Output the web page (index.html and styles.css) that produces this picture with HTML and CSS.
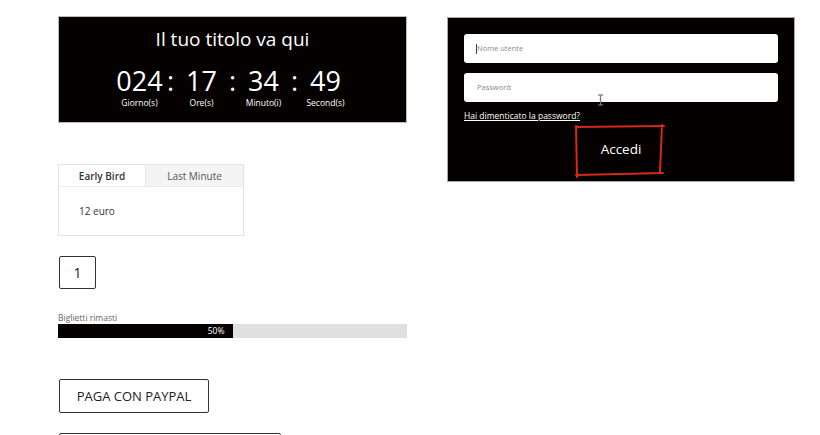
FILE: index.html
```html
<!DOCTYPE html>
<html>
    <head>
        <meta charset="utf-8">
        <title>Evento</title>
        <link rel="stylesheet" href="styles.css">
    </head>
    <body>
        <div class="page">
            <div class="col-left">
                <div class="countdown">
                    <div class="countdown-title">Il tuo titolo va qui</div>
                    <div class="countdown-row">
                        <div class="unit"><span class="num">024</span><span class="lbl">Giorno(s)</span></div>
                        <span class="sep">:</span>
                        <div class="unit"><span class="num">17</span><span class="lbl">Ore(s)</span></div>
                        <span class="sep">:</span>
                        <div class="unit"><span class="num">34</span><span class="lbl">Minuto(i)</span></div>
                        <span class="sep">:</span>
                        <div class="unit"><span class="num">49</span><span class="lbl">Second(s)</span></div>
                    </div>
                </div>

                <div class="tabs">
                    <div class="tabs-head">
                        <span class="tab tab-active">Early Bird</span>
                        <span class="tab">Last Minute</span>
                    </div>
                    <div class="tabs-body">12 euro</div>
                </div>

                <div class="qty">1</div>

                <div class="stock">
                    <div class="stock-label">Biglietti rimasti</div>
                    <div class="stock-bar">
                        <div class="stock-fill" style="width: 50%">50%</div>
                    </div>
                </div>

                <button class="btn-pay">PAGA CON PAYPAL</button>
                <button class="btn-pay btn-wide">&nbsp;</button>
            </div>

            <div class="col-right">
                <div class="login">
                    <div class="field focused"><span class="caret"></span>Nome utente</div>
                    <div class="field">Password</div>
                    <a class="forgot" href="#">Hai dimenticato la password?</a>
                    <div class="login-actions">
                        <span class="btn-login">
                            Accedi
                            <svg class="scribble" width="94" height="56" viewBox="0 0 94 56">
                                <path d="M3 5 L91 4 M89 3 L87 50 M90 51 L3 53 M4 55 L3 4" fill="none" stroke="#d42a1a" stroke-width="2" stroke-linecap="round"/>
                            </svg>
                        </span>
                    </div>
                    <svg class="ibeam" width="7" height="12" viewBox="0 0 7 12">
                        <path d="M1 1 H6 M3.5 1 V11 M1 11 H6" fill="none" stroke="#333" stroke-width="1.2"/>
                        <path d="M1 1 H6 M3.5 1 V11 M1 11 H6" fill="none" stroke="#eee" stroke-width="0.4"/>
                    </svg>
                </div>
            </div>
        </div>
    </body>
</html>
```

FILE: styles.css
```css
body {
    margin: 0;
    background-color: #fff;
    font-family: "Open Sans", "Liberation Sans", sans-serif;
    color: #222;
}
.page {
    display: flex;
    gap: 40px;
    padding: 16px 0 0 58px;
    align-items: flex-start;
}
.col-left {
    width: 349px;
    display: flex;
    flex-direction: column;
    align-items: flex-start;
}
.col-right {
    width: 348px;
    padding-top: 1px;
}

/* countdown */
.countdown {
    box-sizing: border-box;
    width: 349px;
    height: 107px;
    background-color: #050101;
    border: 1px solid #bbb;
    color: #fff;
    text-align: center;
    padding-top: 9px;
}
.countdown-title {
    font-size: 19px;
    line-height: 26px;
}
.countdown-row {
    display: flex;
    justify-content: center;
    margin-top: 15px;
}
.unit {
    width: 44px;
    display: flex;
    flex-direction: column;
    align-items: center;
}
.num {
    font-size: 27px;
    line-height: 28px;
}
.lbl {
    font-size: 8.5px;
    line-height: 11px;
    margin-top: 2px;
    white-space: nowrap;
}
.sep {
    width: 18px;
    font-size: 27px;
    line-height: 27px;
}

/* tabs */
.tabs {
    box-sizing: border-box;
    width: 186px;
    margin-top: 41px;
    border: 1px solid #e4e4e4;
    font-size: 10px;
}
.tabs-head {
    display: flex;
    height: 21px;
    border-bottom: 1px solid #ececec;
}
.tab {
    flex: 1;
    display: flex;
    align-items: center;
    justify-content: center;
    background-color: #f4f4f4;
    color: #555;
    border-left: 1px solid #e4e4e4;
}
.tab-active {
    flex: 0 0 86px;
    background-color: #fff;
    color: #333;
    font-weight: 600;
    border-left: none;
}
.tabs-body {
    height: 48px;
    line-height: 48px;
    padding-left: 20px;
    color: #333;
}

/* quantity */
.qty {
    box-sizing: border-box;
    width: 37px;
    height: 33px;
    margin-top: 20px;
    margin-left: 1px;
    border: 1.5px solid #333;
    border-radius: 2px;
    display: flex;
    align-items: center;
    justify-content: center;
    font-size: 14px;
}

/* stock */
.stock {
    width: 349px;
    margin-top: 23px;
}
.stock-label {
    font-size: 8.5px;
    line-height: 12px;
    color: #666;
}
.stock-bar {
    height: 14px;
    background-color: #e0e0e0;
}
.stock-fill {
    box-sizing: border-box;
    height: 14px;
    background-color: #050101;
    color: #fff;
    font-size: 8.5px;
    line-height: 14px;
    text-align: right;
    padding-right: 8px;
}

/* buttons */
.btn-pay {
    box-sizing: border-box;
    width: 150px;
    height: 34px;
    margin-top: 41px;
    margin-left: 1px;
    border: 1.5px solid #333;
    border-radius: 2px;
    background-color: #fff;
    font-family: inherit;
    font-size: 13px;
    color: #222;
    cursor: pointer;
}
.btn-wide {
    width: 222px;
    margin-top: 20px;
}

/* login */
.login {
    position: relative;
    box-sizing: border-box;
    height: 165px;
    background-color: #050101;
    border: 1px solid #aaa;
    padding: 16px 16px 0 16px;
}
.field {
    height: 29px;
    background-color: #fff;
    border-radius: 3px;
    margin-bottom: 10px;
    padding-left: 13px;
    font-size: 7.5px;
    line-height: 29px;
    color: #888;
    display: flex;
    align-items: center;
}
.field.focused {
    padding-left: 12px;
}
.caret {
    display: inline-block;
    width: 1px;
    height: 10px;
    background-color: #444;
}
.forgot {
    display: block;
    width: max-content;
    margin-top: -2px;
    font-size: 8.5px;
    line-height: 12px;
    color: #fff;
    text-decoration: underline;
}
.login-actions {
    display: flex;
    justify-content: center;
    margin-top: 2px;
}
.btn-login {
    position: relative;
    width: 88px;
    height: 50px;
    display: flex;
    align-items: center;
    justify-content: center;
    color: #fff;
    font-size: 13.5px;
}
.scribble {
    position: absolute;
    left: -4px;
    top: -2px;
}
.ibeam {
    position: absolute;
    left: 149px;
    top: 76px;
}
```
